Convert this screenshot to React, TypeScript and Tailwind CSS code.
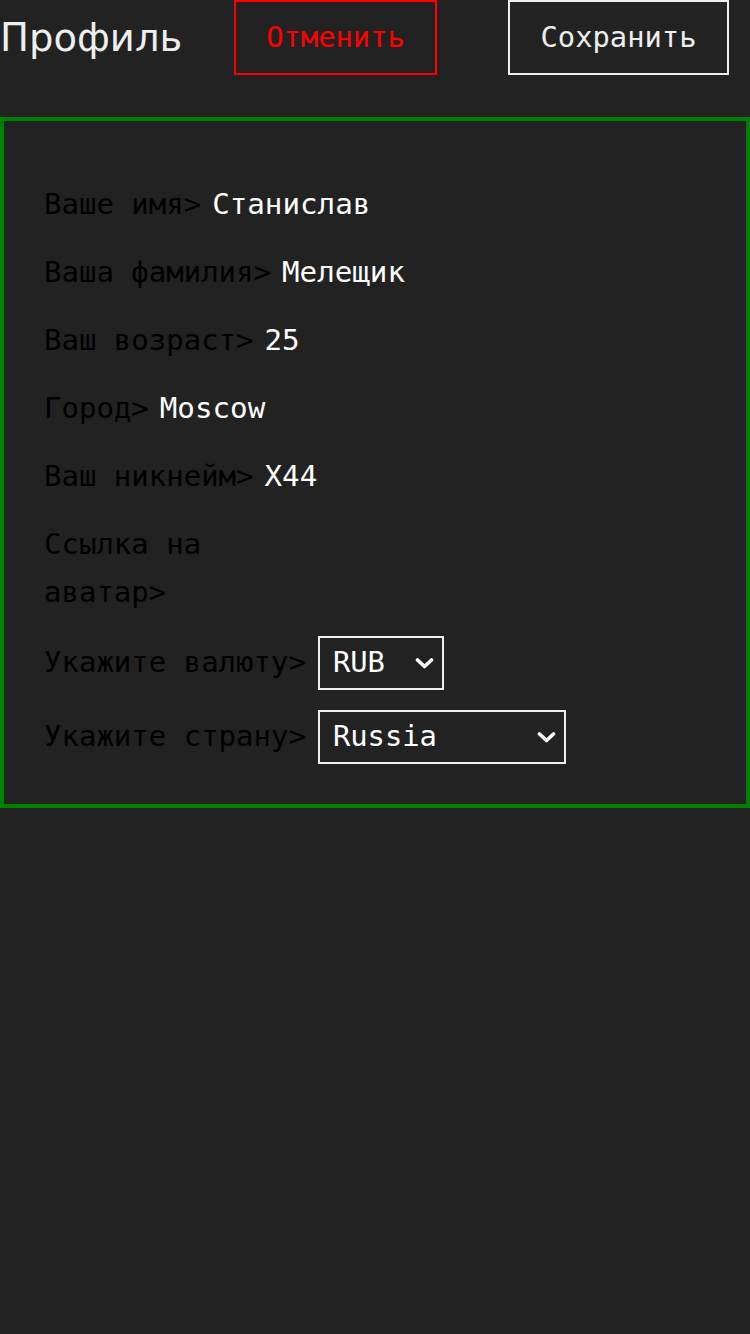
const mono = "font-['DejaVu_Sans_Mono',monospace]";

function Row({ label, value, labelClass = "" }: { label: string; value?: string; labelClass?: string }) {
  return (
    <div className="flex items-start leading-[48px] text-[29px]">
      <span className={`text-black ${labelClass}`}>{label}</span>
      {value && <span className="ml-[11px] text-[29.2px] text-white">{value}</span>}
    </div>
  );
}

function Select({ value, options, width }: { value: string; options: string[]; width: string }) {
  return (
    <div className={`relative ml-[12px] ${width}`}>
      <select
        defaultValue={value}
        className={`h-[54px] w-full appearance-none border-2 border-[#eeeeee] bg-[#222222] pl-[13px] text-[28.8px] text-white outline-none ${mono}`}
      >
        {options.map((o) => (
          <option key={o}>{o}</option>
        ))}
      </select>
      <svg
        className="pointer-events-none absolute right-[10px] top-1/2 -translate-y-1/2"
        width="19"
        height="13"
        viewBox="0 0 19 13"
        fill="none"
      >
        <path d="M2.5 3.5 L9.5 10 L16.5 3.5" stroke="white" strokeWidth="3.6" strokeLinecap="round" strokeLinejoin="round" />
      </svg>
    </div>
  );
}

export default function App() {
  return (
    <div className={`min-h-[1334px] bg-[#222222] ${mono}`}>
      {/* Header */}
      <header className="flex items-center">
        <h1 className="w-[183px] font-['DejaVu_Sans',sans-serif] text-[38.5px] leading-[75px] text-[#eeeeee]">Профиль</h1>
        <button className="ml-[51px] h-[75px] w-[203px] border-2 border-[#ff0000] text-[28.8px] text-[#ff0000]">
          Отменить
        </button>
        <button className="ml-[71px] h-[75px] w-[221px] border-2 border-[#eeeeee] text-[28.8px] text-[#eeeeee]">
          Сохранить
        </button>
      </header>

      {/* Form */}
      <form className="mt-[42px] flex flex-col gap-[20px] border-4 border-[#008000] pb-[40px] pl-[40px] pt-[59px]">
        <Row label="Ваше имя>" value="Станислав" />
        <Row label="Ваша фамилия>" value="Мелещик" />
        <Row label="Ваш возраст>" value="25" />
        <Row label="Город>" value="Moscow" />
        <Row label="Ваш никнейм>" value="X44" />
        <Row label="Ссылка на аватар>" labelClass="w-[190px]" />
        <div className="flex items-center text-[29px]">
          <span className="text-black">Укажите валюту&gt;</span>
          <Select value="RUB" options={["RUB", "USD", "EUR"]} width="w-[126px]" />
        </div>
        <div className="flex items-center text-[29px]">
          <span className="text-black">Укажите страну&gt;</span>
          <Select value="Russia" options={["Russia", "USA", "Germany"]} width="w-[248px]" />
        </div>
      </form>
    </div>
  );
}
